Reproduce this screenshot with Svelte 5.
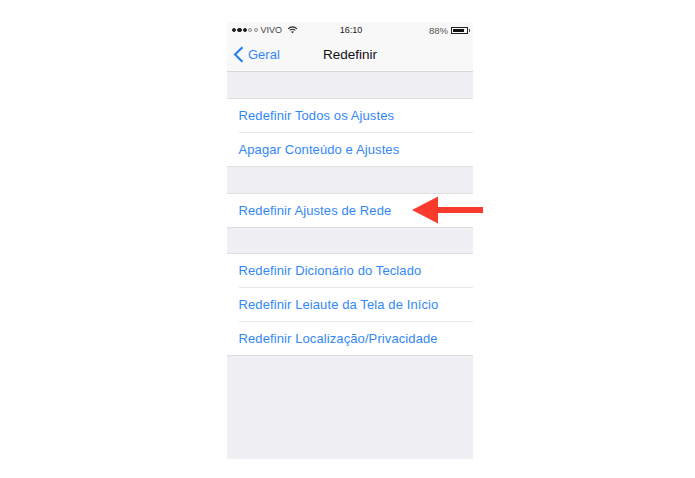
<script>
  const groups = [
    ["Redefinir Todos os Ajustes", "Apagar Conteúdo e Ajustes"],
    ["Redefinir Ajustes de Rede"],
    ["Redefinir Dicionário do Teclado", "Redefinir Leiaute da Tela de Início", "Redefinir Localização/Privacidade"],
  ];
</script>

<div class="phone">
  <header>
    <div class="status">
      <div class="left">
        <span class="dot"></span><span class="dot"></span><span class="dot"></span><span class="dot off"></span><span class="dot off"></span>
        <span class="carrier">VIVO</span>
        <svg class="wifi" width="11" height="8" viewBox="0 0 12 9">
          <path d="M1 3.2C4 .6 8 .6 11 3.2M2.8 5C4.8 3.4 7.2 3.4 9.2 5" fill="none" stroke="#222" stroke-width="1.2" />
          <path d="M4.4 6.4C5.4 5.6 6.6 5.6 7.6 6.4L6 8.2Z" fill="#222" />
        </svg>
      </div>
      <div class="time">16:10</div>
      <div class="right">
        <span>88%</span>
        <span class="battery"><span class="level"></span></span>
        <span class="nub"></span>
      </div>
    </div>
    <div class="nav">
      <div class="back">
        <svg width="11" height="17" viewBox="0 0 11 17">
          <path d="M9.4 1.2 2 8.5l7.4 7.3" fill="none" stroke="#1a7cf8" stroke-width="2" />
        </svg>
        <span>Geral</span>
      </div>
      <div class="title">Redefinir</div>
    </div>
  </header>

  {#each groups as rows}
    <ul>
      {#each rows as row}
        <li><span>{row}</span></li>
      {/each}
    </ul>
  {/each}

  <svg class="arrow" width="72" height="28" viewBox="0 0 72 28">
    <path d="M0 14 26 .5V11h45v6H26v10.500Z" fill="#fb3a2e" />
  </svg>
</div>

<style>
  :global(body) {
    margin: 0;
    background: #fff;
  }
  .phone {
    position: relative;
    width: 246px;
    height: 437px;
    margin: 22px 0 0 227px;
    background: #efeff4;
    font-family: "Liberation Sans", sans-serif;
  }
  header {
    height: 49px;
    background: #f8f8f8;
    border-bottom: 1px solid #d9d9dc;
  }
  .status {
    display: grid;
    grid-template-columns: 1fr auto 1fr;
    align-items: center;
    height: 16px;
    padding: 0 3px 0 5px;
    font-size: 9px;
    color: #333;
  }
  .left {
    display: flex;
    align-items: center;
    gap: 1.2px;
  }
  .dot {
    width: 4.2px;
    height: 4.2px;
    box-sizing: border-box;
    border-radius: 50%;
    background: #222;
    border: 0.5px solid #222;
  }
  .dot.off {
    background: none;
    border-color: #888;
  }
  .carrier {
    margin-left: 1.5px;
    color: #444;
  }
  .wifi {
    margin-left: 4px;
  }
  .time {
    color: #222;
  }
  .right {
    display: flex;
    align-items: center;
    justify-content: flex-end;
    font-size: 9.5px;
    color: #555;
  }
  .battery {
    width: 17px;
    height: 7px;
    box-sizing: border-box;
    margin-left: 3px;
    padding: 1px;
    border: 0.5px solid #222;
  }
  .level {
    display: block;
    width: 88%;
    height: 100%;
    background: #111;
  }
  .nub {
    width: 1px;
    height: 3px;
    margin-left: 1px;
    background: #555;
  }
  .nav {
    position: relative;
    display: flex;
    align-items: center;
    justify-content: center;
    height: 33px;
  }
  .back {
    position: absolute;
    left: 6px;
    top: 8px;
    display: flex;
    align-items: center;
    gap: 4px;
    font-size: 13px;
    color: #3388f8;
  }
  .title {
    font-size: 13.5px;
    color: #111;
  }
  ul {
    list-style: none;
    margin: 26px 0 0;
    padding: 0 0 0 12px;
    background: #fff;
    border-top: 1px solid #dfdfe2;
    border-bottom: 1px solid #dfdfe2;
  }
  ul:last-of-type {
    margin-top: 25px;
  }
  li {
    height: 33px;
    line-height: 33px;
    margin-left: -0.5px;
    font-size: 13px;
    letter-spacing: 0.1px;
    color: #3388f8;
    white-space: nowrap;
  }
  li + li {
    border-top: 1px solid #e8e8ea;
  }
  .arrow {
    position: absolute;
    left: 185px;
    top: 174px;
  }
</style>
